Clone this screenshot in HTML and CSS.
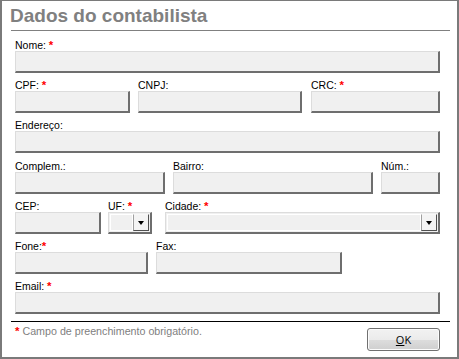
FILE: index.html
```html
<!DOCTYPE html>
<html lang="pt">
<head>
<meta charset="utf-8">
<title>Dados do contabilista</title>
<link rel="stylesheet" href="styles.css">
</head>
<body>
<div class="window">
  <h1 class="title">Dados do contabilista</h1>
  <form class="form">
    <div class="row">
      <div class="field w-full">
        <label class="label">Nome: <span class="req">*</span></label>
        <div class="input"></div>
      </div>
    </div>
    <div class="row gap8">
      <div class="field w-cpf">
        <label class="label">CPF: <span class="req">*</span></label>
        <div class="input"></div>
      </div>
      <div class="field w-cnpj">
        <label class="label">CNPJ:</label>
        <div class="input"></div>
      </div>
      <div class="field w-crc">
        <label class="label">CRC: <span class="req">*</span></label>
        <div class="input"></div>
      </div>
    </div>
    <div class="row">
      <div class="field w-full">
        <label class="label">Endereço:</label>
        <div class="input"></div>
      </div>
    </div>
    <div class="row gap8 extra">
      <div class="field w-compl">
        <label class="label">Complem.:</label>
        <div class="input"></div>
      </div>
      <div class="field w-bairro">
        <label class="label">Bairro:</label>
        <div class="input"></div>
      </div>
      <div class="field w-num">
        <label class="label">Núm.:</label>
        <div class="input"></div>
      </div>
    </div>
    <div class="row">
      <div class="field w-cep">
        <label class="label">CEP:</label>
        <div class="input"></div>
      </div>
      <div class="field w-uf">
        <label class="label">UF: <span class="req">*</span></label>
        <div class="select">
          <div class="select-text"></div>
          <div class="select-btn"><span class="arrow"></span></div>
        </div>
      </div>
      <div class="field w-cidade">
        <label class="label">Cidade: <span class="req">*</span></label>
        <div class="select">
          <div class="select-text"></div>
          <div class="select-btn"><span class="arrow"></span></div>
        </div>
      </div>
    </div>
    <div class="row gap8">
      <div class="field w-fone">
        <label class="label">Fone:<span class="req">*</span></label>
        <div class="input"></div>
      </div>
      <div class="field w-fax">
        <label class="label">Fax:</label>
        <div class="input"></div>
      </div>
    </div>
    <div class="row">
      <div class="field w-full">
        <label class="label">Email: <span class="req">*</span></label>
        <div class="input"></div>
      </div>
    </div>
  </form>
  <div class="separator"></div>
  <div class="footer">
    <p class="note"><span class="req">*</span> Campo de preenchimento obrigatório.</p>
    <button class="btn" type="button"><u>O</u>K</button>
  </div>
</div>
</body>
</html>
```

FILE: styles.css
```css
html, body {
  margin: 0;
  padding: 0;
  background: #ffffff;
}

.window {
  width: 459px;
  height: 359px;
  box-sizing: border-box;
  border-style: solid;
  border-color: #7a7a7a;
  border-width: 1px 2px 2px 2px;
  display: flex;
  flex-direction: column;
  font-family: "Liberation Sans", Arial, sans-serif;
  background: #ffffff;
}

.title {
  margin: 0 7px 0 9px;
  padding: 0;
  border-bottom: 1px solid #808080;
  font: bold 19px/29px "Liberation Sans", Arial, sans-serif;
  color: #808080;
  text-indent: -1px;
}

.form {
  margin: 0;
  padding: 8px 17px 0 13px;
  display: flex;
  flex-direction: column;
  gap: 6px;
}

.row {
  display: flex;
}

.row.gap8 {
  gap: 8px;
}

.row.extra {
  margin-top: 1px;
}

.field {
  display: flex;
  flex-direction: column;
}

.label {
  display: block;
  font-size: 10.5px;
  line-height: 12px;
  height: 12px;
  color: #000000;
  white-space: nowrap;
}

.req {
  color: #ff0000;
  font-weight: bold;
  font-size: 11.5px;
}

.input {
  height: 22px;
  box-sizing: border-box;
  background: #f0f0f0;
  border-style: solid;
  border-width: 1px 2px 2px 1px;
  border-color: #dcdcdc #6e6e6e #6e6e6e #dcdcdc;
}

.w-full { width: 425px; }
.w-cpf { width: 115px; }
.w-cnpj { width: 164px; }
.w-crc { width: 129px; margin-left: 1px; }
.w-compl { width: 150px; }
.w-bairro { width: 200px; }
.w-num { width: 59px; }
.w-cep { width: 86px; }
.w-uf { width: 44px; margin-left: 7px; }
.w-cidade { width: 275px; margin-left: 13px; }
.w-fone { width: 133px; }
.w-fax { width: 186px; }

.select {
  height: 22px;
  box-sizing: border-box;
  display: flex;
  background: #f0f0f0;
  border-style: solid;
  border-width: 1px 2px 2px 1px;
  border-color: #dcdcdc #6e6e6e #6e6e6e #dcdcdc;
  padding: 1px;
}

.select-text {
  flex: 1;
  border: 1px solid #ffffff;
  background: #f0f0f0;
}

.select-btn {
  width: 16px;
  box-sizing: border-box;
  border-style: solid;
  border-width: 1px;
  border-color: #f8f8f8 #505050 #505050 #a0a0a0;
  background: #f4f4f4;
  display: flex;
  align-items: center;
  justify-content: center;
}

.arrow {
  width: 0;
  height: 0;
  border-left: 3.5px solid transparent;
  border-right: 3.5px solid transparent;
  border-top: 4px solid #000000;
}

.separator {
  margin: 7px 7px 0 9px;
  height: 1px;
  background: #000000;
}

.footer {
  display: flex;
  justify-content: space-between;
  align-items: flex-start;
  padding: 0 17px 0 13px;
}

.note {
  margin: 3px 0 0 0;
  font-size: 10.7px;
  line-height: 12px;
  color: #808080;
  white-space: nowrap;
}

.btn {
  margin-top: 6px;
  width: 73px;
  height: 23px;
  box-sizing: border-box;
  border: 1px solid #707070;
  border-radius: 3px;
  background: linear-gradient(to bottom, #f2f2f2 0%, #ebebeb 50%, #dddddd 51%, #cfcfcf 100%);
  box-shadow: inset 0 0 0 1px #fcfcfc;
  font: 11px/1 "Open Sans", "Noto Sans", sans-serif;
  color: #000000;
  padding: 0;
}

.btn u {
  text-decoration: underline;
}
```
